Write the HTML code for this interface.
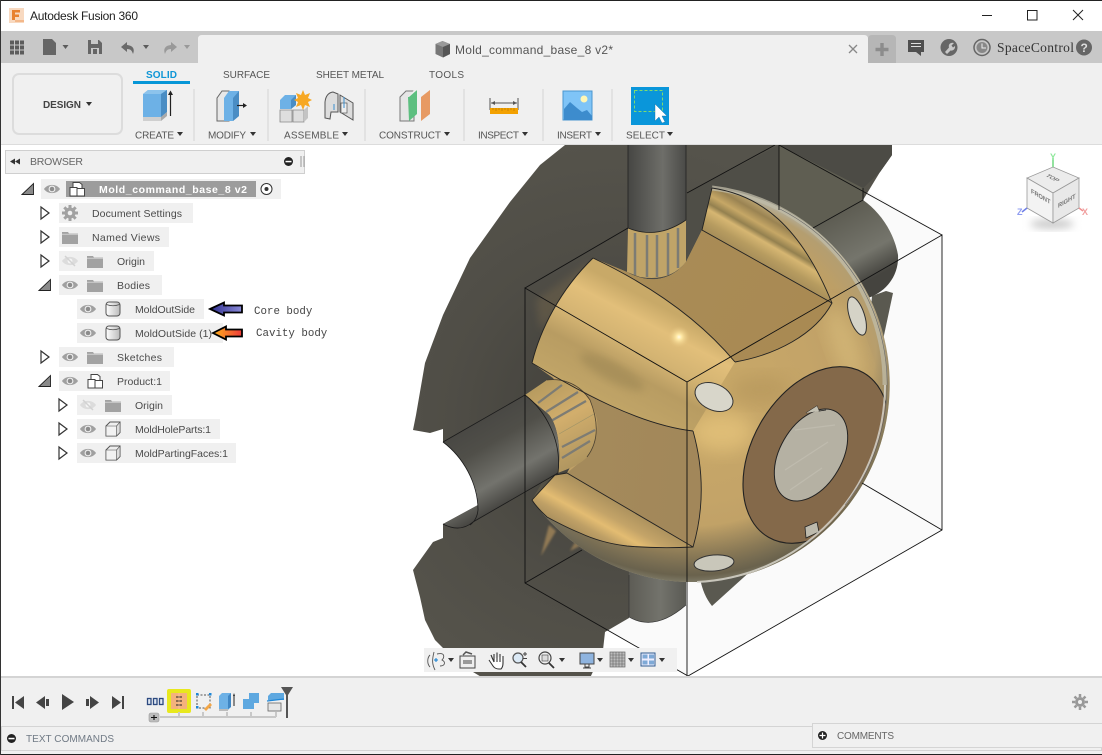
<!DOCTYPE html>
<html><head><meta charset="utf-8"><title>Autodesk Fusion 360</title>
<style>
html,body{margin:0;padding:0;background:#fff;width:1102px;height:755px;overflow:hidden}
svg{display:block;position:absolute;left:0;top:0}
text{font-family:"Liberation Sans",sans-serif;font-size:10px;fill:#555}
.tr{font-size:10.5px;fill:#4a4a4a}
.rb{font-size:10px;fill:#555}
.an{font-family:"Liberation Mono",monospace;font-size:10.8px;fill:#444}
</style></head><body>
<svg width="1102" height="755" viewBox="0 0 1102 755" xmlns="http://www.w3.org/2000/svg">
<defs>
<linearGradient id="cyl" x1="0" x2="1" y1="0" y2="0"><stop offset="0" stop-color="#464643"/><stop offset=".6" stop-color="#6e6e69"/><stop offset="1" stop-color="#4a4a47"/></linearGradient>
<linearGradient id="cylB" x1="0" x2="1" y1="0" y2="0"><stop offset="0" stop-color="#5d5c55"/><stop offset=".55" stop-color="#73736c"/><stop offset="1" stop-color="#5a5a54"/></linearGradient>
<linearGradient id="cylL" gradientUnits="userSpaceOnUse" x1="490" y1="415" x2="532" y2="488"><stop offset="0" stop-color="#494844"/><stop offset=".3" stop-color="#504f49"/><stop offset=".72" stop-color="#73736d"/><stop offset="1" stop-color="#474642"/></linearGradient>
<linearGradient id="cylR" gradientUnits="userSpaceOnUse" x1="825" y1="220" x2="860" y2="285"><stop offset="0" stop-color="#5d5c52"/><stop offset=".65" stop-color="#75756c"/><stop offset="1" stop-color="#45443f"/></linearGradient>
<radialGradient id="back" gradientUnits="userSpaceOnUse" cx="620" cy="420" r="280"><stop offset="0" stop-color="#3f3e39"/><stop offset=".6" stop-color="#4f4d46"/><stop offset="1" stop-color="#55534b"/></radialGradient>
<radialGradient id="gold" gradientUnits="userSpaceOnUse" cx="700" cy="390" r="198"><stop offset="0" stop-color="#c9a968"/><stop offset=".55" stop-color="#c4a468"/><stop offset=".85" stop-color="#bd9f66"/><stop offset=".95" stop-color="#b49e70"/><stop offset="1" stop-color="#b4b09f"/></radialGradient>
<radialGradient id="under" gradientUnits="userSpaceOnUse" cx="690" cy="340" r="245"><stop offset=".76" stop-color="#665f4b" stop-opacity="0"/><stop offset=".88" stop-color="#665f4b" stop-opacity=".6"/><stop offset=".96" stop-color="#665f4b" stop-opacity=".95"/><stop offset="1" stop-color="#85826f"/></radialGradient>
<linearGradient id="flat1" gradientUnits="userSpaceOnUse" x1="620" y1="240" x2="790" y2="340"><stop offset="0" stop-color="#a98c57"/><stop offset="1" stop-color="#a98a53"/></linearGradient>
<linearGradient id="flat2" gradientUnits="userSpaceOnUse" x1="590" y1="460" x2="700" y2="470"><stop offset="0" stop-color="#a48a5b"/><stop offset="1" stop-color="#a2875a"/></linearGradient>
<linearGradient id="bandU" gradientUnits="userSpaceOnUse" x1="630" y1="290" x2="575" y2="395"><stop offset="0" stop-color="#c8a968"/><stop offset=".18" stop-color="#e2bf7a"/><stop offset=".42" stop-color="#d3b372"/><stop offset=".62" stop-color="#b89c62"/><stop offset="1" stop-color="#c2a668"/></linearGradient>
<linearGradient id="bandL" gradientUnits="userSpaceOnUse" x1="608" y1="495" x2="583" y2="540"><stop offset="0" stop-color="#a98f5c"/><stop offset=".35" stop-color="#c4a468"/><stop offset=".55" stop-color="#e3bc72"/><stop offset=".75" stop-color="#bfa066"/><stop offset="1" stop-color="#a58c5c"/></linearGradient>
<linearGradient id="bandT" gradientUnits="userSpaceOnUse" x1="770" y1="268" x2="800" y2="216"><stop offset="0" stop-color="#a88f5a"/><stop offset=".15" stop-color="#b79c60"/><stop offset=".33" stop-color="#d6b672"/><stop offset=".42" stop-color="#93804f"/><stop offset=".55" stop-color="#c6a766"/><stop offset=".7" stop-color="#9a8352"/><stop offset=".9" stop-color="#c9b17c"/></linearGradient>
<linearGradient id="stubL" gradientUnits="userSpaceOnUse" x1="545" y1="385" x2="585" y2="460"><stop offset="0" stop-color="#b89c60"/><stop offset=".45" stop-color="#d2ae6c"/><stop offset="1" stop-color="#b09660"/></linearGradient>
<linearGradient id="body" x1="0" x2="1"><stop offset="0" stop-color="#fff"/><stop offset="1" stop-color="#bbb"/></linearGradient>
<linearGradient id="arB" x1="0" x2="1"><stop offset="0" stop-color="#2f2f8f"/><stop offset="1" stop-color="#8a8ad8"/></linearGradient>
<linearGradient id="arO" x1="0" x2="1"><stop offset="0" stop-color="#ffb21c"/><stop offset="1" stop-color="#ee3a3a"/></linearGradient>
<filter id="b1" x="-30%" y="-30%" width="160%" height="160%"><feGaussianBlur stdDeviation="1"/></filter>
<filter id="b3" x="-30%" y="-30%" width="160%" height="160%"><feGaussianBlur stdDeviation="4"/></filter>
<filter id="b8" x="-30%" y="-30%" width="160%" height="160%"><feGaussianBlur stdDeviation="9"/></filter>
<radialGradient id="spot"><stop offset="0" stop-color="#fffbe6"/><stop offset=".25" stop-color="#ffe9a5"/><stop offset="1" stop-color="#e4c17d" stop-opacity="0"/></radialGradient>
<clipPath id="vp"><rect x="0" y="145" width="1102" height="531"/></clipPath>
<clipPath id="sph"><circle cx="690" cy="385" r="197"/></clipPath>
<symbol id="eye" viewBox="0 0 16 12" overflow="visible"><path d="M0 6C3.500 .5 12.500 .5 16 6C12.500 11.500 3.500 11.500 0 6Z" fill="#a0a0a0"/><circle cx="8" cy="6" r="3.400" fill="#f0f0f0"/><circle cx="8" cy="6" r="2.300" fill="#8c8c8c"/></symbol>
<symbol id="eyeoff" viewBox="0 0 16 12" overflow="visible"><path d="M0 6C3.500 .5 12.500 .5 16 6C12.500 11.500 3.500 11.500 0 6Z" fill="#dcdcdc"/><circle cx="8" cy="6" r="2.400" fill="#f4f4f4"/><path d="M3 1L13 11" stroke="#d2d2d2" stroke-width="1.500"/></symbol>
<symbol id="folder" viewBox="0 0 16 13" overflow="visible"><path d="M0 1H6L7 2.500H16V13H0Z" fill="#a2a2a2"/><path d="M0 3.200H16" stroke="#e2e2e2" stroke-width=".7"/></symbol>
<symbol id="tri" viewBox="0 0 10 14" overflow="visible"><path d="M1 1L9 7L1 13Z" fill="#fff" stroke="#333" stroke-width="1.200"/></symbol>
<symbol id="down" viewBox="0 0 12 12" overflow="visible"><path d="M0 11.500L11.500 .5V11.500Z" fill="#8a8a8a" stroke="#222" stroke-width=".9"/></symbol>
<symbol id="comp" viewBox="0 0 16 16" overflow="visible"><path d="M1 15V6.500H4V1.500H10.500L13 3.500V7.500H15.500V15Z M4 6.500H8V15 M8 7.500H13" fill="#fff" stroke="#444" stroke-width="1"/></symbol>
<symbol id="cylic" viewBox="0 0 16 16" overflow="visible"><rect x="1" y="1" width="14" height="14" rx="3" fill="url(#body)" stroke="#555" stroke-width="1"/><path d="M1.500 3.500Q8 6 14.500 3.500" fill="none" stroke="#555" stroke-width=".8"/></symbol>
<symbol id="box" viewBox="0 0 16 16" overflow="visible"><path d="M1 5L5 1H15V11.500L11.500 15H1Z" fill="#eee" stroke="#555" stroke-width="1"/><path d="M11.500 15V5H1V15ZM11.500 5L15 1V11.500L11.500 15Z" fill="#ddd" stroke="#555" stroke-width=".6"/><rect x="1.500" y="5.500" width="9.500" height="9" fill="#f2f2f2"/></symbol>
<symbol id="car" viewBox="0 0 6 4" overflow="visible"><path d="M0 0H6L3 4Z" fill="#333"/></symbol>
</defs>

<!-- Window frame / title -->
<rect width="1102" height="755" fill="#fff"/>
<rect x="0" y="0" width="1102" height="1" fill="#222"/>
<g>
<rect x="9" y="8" width="15" height="15" fill="#f8d9c0"/>
<path d="M12 10H20V12.500H15V14.500H19V17H15V20H12Z" fill="#e8812f"/>
<rect x="15" y="20" width="9" height="2" fill="#f3b88a"/>
<text x="30" y="20" style="font-size:12px;fill:#222" textLength="108">Autodesk Fusion 360</text>
<rect x="982" y="15" width="10" height="1" fill="#222"/>
<rect x="1027.500" y="10.500" width="9.500" height="9.500" fill="none" stroke="#222"/>
<path d="M1073 10L1083 20M1083 10L1073 20" stroke="#222" stroke-width="1"/>
</g>

<!-- gray top bar -->
<rect x="1" y="31" width="1101" height="32" fill="#c8c8c8"/>
<path d="M198 63V39Q198 35 202 35H864Q868 35 868 39V63Z" fill="#f0f0f0"/>
<path d="M868 39Q868 35 872 35H892Q896 35 896 39V63H868Z" fill="#b6b6b6"/>
<g fill="#5c5c5c">
<path d="M10 41h4v4h-4zM15 41h4v4h-4zM20 41h4v4h-4zM10 46h4v4h-4zM15 46h4v4h-4zM20 46h4v4h-4zM10 51h4v4h-4zM15 51h4v4h-4zM20 51h4v4h-4z" transform="translate(0,-.5)"/>
<path d="M43 39H52L56 43V55H43Z" fill="#666"/>
<path d="M62.500 45H68.500L65.500 49Z"/>
<path d="M88 40H99L102 43V54H88Z" fill="#666"/><rect x="91" y="40" width="7" height="4" fill="#c8c8c8"/><rect x="91" y="48" width="8" height="6" fill="#c8c8c8"/><rect x="93" y="49" width="4" height="5" fill="#666"/>
<path d="M127 42L121 47L127 52V49C131 49 132 51 133 54C135 49 133 45.500 127 45Z" fill="#6a6a6a"/>
<path d="M143 45H149L146 49Z"/>
<path d="M171 42L177 47L171 52V49C167 49 166 51 165 54C163 49 165 45.500 171 45Z" fill="#999"/>
<path d="M184 45H190L187 49Z" fill="#999"/>
</g>
<g>
<path d="M442.500 41L450 44V54L443 57.500L435.500 54V44Z" fill="#777"/><path d="M435.500 44L442.500 41L450 44L443 47Z" fill="#999"/><path d="M443 47V57.500L450 54V44Z" fill="#555"/>
<text x="455" y="54" style="font-size:12px;fill:#555" textLength="158">Mold_command_base_8 v2*</text>
<path d="M849 45L857 53M857 45L849 53" stroke="#888" stroke-width="1.300"/>
<path d="M882 43V56M875.500 49.500H888.500" stroke="#8c8c8c" stroke-width="3.400"/>
<path d="M908 40H924V52H921V56L916 52H908Z" fill="#4f4f4f"/><path d="M911 43.500H921M911 46.500H921" stroke="#ddd"/>
<circle cx="949" cy="47.500" r="8.500" fill="#666"/><path d="M945 52L949 47.500C948 44 951 42 954 43L951.500 45.500L953 47.500L955 46C955.500 49 953 51 950.500 50.500L947 54Z" fill="#c8c8c8"/>
<circle cx="982" cy="47.500" r="8" fill="#c8c8c8" stroke="#666" stroke-width="1.500"/><circle cx="982" cy="47.500" r="5.500" fill="#888"/><path d="M982 43.500V48H986" stroke="#eee" fill="none"/>
<text x="997" y="52" style="font-family:'Liberation Serif',serif;font-size:13.500px;fill:#333" textLength="77">SpaceControl</text>
<circle cx="1084" cy="47.500" r="8" fill="#666"/><text x="1080.500" y="52" style="font-size:12px;font-weight:bold;fill:#ddd">?</text>
</g>

<!-- Ribbon -->
<rect x="1" y="63" width="1101" height="82" fill="#f0f0f0"/>
<rect x="1" y="144" width="1101" height="1" fill="#dcdcdc"/>
<rect x="13" y="74" width="109" height="60" rx="6" fill="#f0f0f0" stroke="#dcdcdc" stroke-width="2"/>
<text x="43" y="108" style="font-size:10px;font-weight:bold;fill:#444" textLength="38">DESIGN</text>
<use href="#car" x="86" y="102" width="6" height="4"/>
<text x="146" y="78" style="font-size:10px;font-weight:bold;fill:#0f96d6" textLength="31">SOLID</text>
<rect x="133" y="81" width="57" height="3" fill="#0696d7"/>
<text x="223" y="78" class="rb" textLength="47">SURFACE</text>
<text x="316" y="78" class="rb" textLength="68">SHEET METAL</text>
<text x="429" y="78" class="rb" textLength="35">TOOLS</text>
<g fill="#e2e2e2"><rect x="193" y="89" width="2" height="52"/><rect x="267" y="89" width="2" height="52"/><rect x="364" y="89" width="2" height="52"/><rect x="463" y="89" width="2" height="52"/><rect x="542" y="89" width="2" height="52"/><rect x="611" y="89" width="2" height="52"/></g>
<text x="135" y="138.500" class="rb" textLength="39">CREATE</text><use href="#car" x="177" y="132" width="6" height="4"/>
<text x="208" y="138.500" class="rb" textLength="38">MODIFY</text><use href="#car" x="250" y="132" width="6" height="4"/>
<text x="284" y="138.500" class="rb" textLength="55">ASSEMBLE</text><use href="#car" x="342" y="132" width="6" height="4"/>
<text x="379" y="138.500" class="rb" textLength="62">CONSTRUCT</text><use href="#car" x="444" y="132" width="6" height="4"/>
<text x="478" y="138.500" class="rb" textLength="41">INSPECT</text><use href="#car" x="522" y="132" width="6" height="4"/>
<text x="557" y="138.500" class="rb" textLength="35">INSERT</text><use href="#car" x="595" y="132" width="6" height="4"/>
<text x="626" y="138.500" class="rb" textLength="39">SELECT</text><use href="#car" x="667" y="132" width="6" height="4"/>

<!-- create icon -->
<path d="M143 94L148 90H167V112L161 117H143Z" fill="#6db1e6"/><path d="M143 94L148 90H167L161 94Z" fill="#8cc3ec"/><path d="M161 94L167 90V112L161 117Z" fill="#4a8dc4"/>
<path d="M143 117H161V121H143Z" fill="#cfcfcf"/><path d="M161 117L167 112V116L161 121Z" fill="#aaa"/>
<path d="M170.500 116V93" stroke="#222" stroke-width="1.200"/><path d="M168 95L170.500 90.500L173 95Z" fill="#222"/>
<!-- modify icon -->
<path d="M217 98L222 91H229V121H217Z" fill="#e8e8e8" stroke="#666"/><path d="M224 98L229 91H239V116L233 121H224Z" fill="#6db1e6"/><path d="M233 98L239 91V116L233 121Z" fill="#4a8dc4"/>
<path d="M237 105.500H245" stroke="#222" stroke-width="1.200"/><path d="M243 103L247 105.500L243 108Z" fill="#222"/>
<!-- assemble icons -->
<path d="M280 100L285 95H296V105L291 109H280Z" fill="#6db1e6"/><path d="M291 100L296 95V105L291 109Z" fill="#4a8dc4"/>
<path d="M280 110H292V122H280Z" fill="#dedede" stroke="#888" stroke-width=".8"/><path d="M293 110H304V122H293Z" fill="#dedede" stroke="#888" stroke-width=".8"/><path d="M304 110L308 106V118L304 122Z" fill="#c4c4c4"/>
<path d="M303 90L305 95L310 93L308 98L312 100L308 102L310 107L305 105L303 110L301 105L296 107L298 102L294 100L298 98L296 93L301 95Z" fill="#f7a823"/>
<path d="M325 118V102Q326 93 333 92L338 94V112L331 112L330 119Z" fill="#ddd" stroke="#555"/><path d="M340 95L353 103V120L340 112Z" fill="#ddd" stroke="#555"/><rect x="341" y="103" width="6" height="10" fill="#eee" stroke="#555" stroke-width=".7"/><path d="M344 97V108M334 104V110" stroke="#3a8fd0"/>
<!-- construct icon -->
<path d="M400 97L406 91H414V121H400Z" fill="#e6e6e6" stroke="#777"/><path d="M408 97L417 90V114L409 121Z" fill="#5dbf80"/><path d="M408 97L414 90H417L409 97Z" fill="#eee"/><path d="M421 97L430 90V114L421 121Z" fill="#e79a63"/>
<!-- inspect -->
<path d="M490 98V110M518 98V110" stroke="#555"/><path d="M491 103H517" stroke="#555"/><path d="M491 103L495 101V105ZM517 103L513 101V105Z" fill="#555"/>
<rect x="490" y="108" width="28" height="6" fill="#f3a100"/><path d="M493 108v2M496 108v3M499 108v2M502 108v3M505 108v2M508 108v3M511 108v2M514 108v3" stroke="#b97a00" stroke-width=".7"/>
<!-- insert -->
<rect x="563" y="91" width="29" height="29" fill="#7fc4f7" stroke="#4a96cf"/><circle cx="584" cy="99" r="3.500" fill="#fff6b5"/><path d="M564 120V109L570 102L577 108L582 112L587 110L592 116V120Z" fill="#3d8ccd"/>
<!-- select -->
<rect x="631" y="87" width="38" height="38" fill="#0a96da"/><rect x="634.500" y="90.500" width="28" height="21" fill="none" stroke="#7fdc6e" stroke-dasharray="3 2"/><path d="M655 104V121L659 117L662 123L665 122L662 116L667 116Z" fill="#fff" stroke="#1b6da0" stroke-width=".4"/>

<!-- Viewport 3D -->
<g clip-path="url(#vp)">
<!-- transparent box -->
<path d="M525 583L688 676L942 530V235L863 188L600 300Z" fill="#fafafa"/>
<!-- dark back wall -->
<path d="M565 145L540 165L510 202L470 258L443 315L425 363L416 415L413 430L430 433L443 429V442C463 457 478 483 478 505L443 524V538L433 542L413 570L420 597L425 620L435 640L443 648L473 672L483 678H590L603 650L605 632L629 618L640 500L800 330L863 200L880 172L892 155V145Z" fill="url(#back)"/>
<path d="M687 193L779 145H892V155L880 172L863 188V200L813 228L760 300L687 300Z" fill="#4f4e47"/>
<path d="M779 145L863 188V200L813 228L779 240Z" fill="#5f5e52"/>
<path d="M779 145H892V155L880 172L863 188Z" fill="#4c4b45"/>
<!-- right fragment -->
<path d="M872 296L886 291L893 293L883 340L870 320Z" fill="#5a5950"/>
<!-- right cylinder -->
<path d="M813 228L863 200C880 212 894 232 898 255C899 272 890 290 868 298L830 300Z" fill="url(#cylR)"/>
<!-- bottom cylinder -->
<path d="M629 560V617Q655 632 686 605V560Z" fill="url(#cylB)"/>
<path d="M629 575V617Q655 632 686 605" fill="none" stroke="#333" stroke-width=".7"/>
<!-- bottom fragment -->
<path d="M700 578Q703 595 712 606L754 568Z" fill="#5a5950"/>
<!-- top cylinder -->
<path d="M628 145H686V222Q657 244 628 228Z" fill="url(#cyl)"/>
<path d="M628 228Q657 240 686 220V262Q670 282 640 277L627 272Z" fill="#c0a468"/>
<g stroke="#7d7c74" stroke-width="2.500"><path d="M635 233V275M647 235V277M657 235V277M668 233V275M678 228V268"/></g>
<path d="M628 228Q657 240 686 220" fill="none" stroke="#222" stroke-width=".8"/>
<path d="M628 145V228M686 145V220" stroke="#222" stroke-width=".8" fill="none"/>
<!-- translucent gold haze on walls -->
<path d="M536 300L590 262L600 280L560 310L540 330Z" fill="#8a7550" opacity=".3" filter="url(#b3)"/>
<path d="M549 525L556 531L541 556Z" fill="#c09a60" opacity=".6" filter="url(#b1)"/>
<path d="M570 551L580 546L575 542Z" fill="#c09a60" opacity=".55" filter="url(#b1)"/>

<!-- gold body -->
<path d="M712 188A197.500 197.500 0 1 1 532 500L555 475L567 473L590 430L553 378L532 363C540 330 560 290 593 258L627 272C650 285 672 280 686 262L702 230Z" fill="url(#gold)"/>
<!-- soft highlights -->
<g clip-path="url(#sph)">
<ellipse cx="722" cy="432" rx="32" ry="20" fill="#e6c47c" opacity=".75" filter="url(#b8)"/>
<ellipse cx="845" cy="345" rx="14" ry="40" fill="#dcc07f" opacity=".6" filter="url(#b8)" transform="rotate(-20 845 345)"/>
<ellipse cx="760" cy="390" rx="30" ry="14" fill="#b3945a" opacity=".6" filter="url(#b8)"/>
</g>
<!-- lower sphere shading -->
<path d="M712 188A197.500 197.500 0 1 1 532 500Z" fill="url(#under)"/>
<!-- Upper band -->
<path d="M593 258C560 290 540 330 532 363C580 392 640 425 693 431L735 362C700 320 650 285 593 258Z" fill="url(#bandU)"/>
<ellipse cx="612" cy="372" rx="36" ry="9" fill="#94804f" opacity=".45" filter="url(#b3)" transform="rotate(28 612 372)"/>
<!-- Flats -->
<path d="M702 230L832 303C815 335 775 355 735 362C700 320 650 285 593 258L627 272C650 285 672 280 686 262Z" fill="url(#flat1)"/>
<path d="M583 391C620 412 655 425 693 431C704 470 704 510 693 547L567 473L585 458C597 445 600 425 595 413C592 402 587 396 583 391Z" fill="url(#flat2)"/>
<!-- Top band -->
<path d="M712 188C760 195 800 225 832 303L702 230Z" fill="url(#bandT)"/>
<!-- lower band -->
<path d="M567 473L555 475L532 500C537 508 542 512 547 517C560 524 570 529 580 533C595 540 610 544 627 546C650 548 672 548 693 547Z" fill="url(#bandL)"/>
<!-- stub left -->
<path d="M525 395L547 380C565 378 580 385 590 400C598 420 600 440 587 457C580 465 565 470 558 473C562 445 556 420 547 413Z" fill="url(#stubL)"/>
<g stroke="#7d7c74" stroke-width="2.300"><path d="M538 403L562 385M546 412L578 392M551 421L586 401M562 447L595 430M562 458L590 441"/></g>
<path d="M559 434L594 414" stroke="#a09468" stroke-width=".7"/>
<path d="M547 380C565 378 580 385 590 400C598 420 600 440 587 457" fill="none" stroke="#4a4030" stroke-width=".8"/>
<!-- left cylinder -->
<path d="M443 442L525 395L547 413C556 420 562 445 558 473L473 522Q460 533 443 524L478 505C478 483 463 457 443 442Z" fill="url(#cylL)"/>
<path d="M443 442L525 395C545 410 562 440 558 473L473 522Q460 533 443 524M443 442C463 457 478 483 478 510Q477 520 470 525" fill="none" stroke="#1b1b1b" stroke-width=".8"/>
<!-- round boss -->
<g clip-path="url(#sph)">
<ellipse cx="816" cy="455" rx="64" ry="95" transform="rotate(30 816 455)" fill="#84694a" stroke="#222" stroke-width="1.100"/>
</g>
<ellipse cx="811" cy="455" rx="31" ry="50" transform="rotate(30 811 455)" fill="#b5b1a3" stroke="#222"/>
<path d="M795 430L835 425M785 470L828 442M790 490L822 468" stroke="#c9c6b9" stroke-width="1.200" opacity=".5"/>
<path d="M806 413L817 406L819 411L826 410" fill="none" stroke="#222" stroke-width=".8"/><path d="M806 413L817 406L819 411Z" fill="#c5c2b4"/>
<path d="M805 527L817 522L819 532L806 538Z" fill="#bdbaad" stroke="#222" stroke-width=".8"/>
<!-- small holes -->
<ellipse cx="714" cy="397" rx="20" ry="13" transform="rotate(25 714 397)" fill="#d8d6ca" stroke="#333"/>
<ellipse cx="857" cy="316" rx="7.500" ry="20" transform="rotate(-18 857 316)" fill="#d5d3c7" stroke="#333"/>
<ellipse cx="714" cy="563" rx="20" ry="8" transform="rotate(-5 714 563)" fill="#c9c7ba" stroke="#333"/>
<!-- silhouette rim -->
<path d="M712 188A196 196 0 0 1 885 385" fill="none" stroke="#c0bca8" stroke-width="5" opacity=".75"/>
<path d="M885 385A197 197 0 0 1 697 582" fill="none" stroke="#d6d4ca" stroke-width="2" opacity=".85"/>
<path d="M780 209A196 196 0 0 1 845 505" fill="none" stroke="#666" stroke-width=".6"/>
<!-- Edge lines -->
<g fill="none" stroke="#222" stroke-width=".9">
<path d="M593 258C560 290 540 330 532 363M593 258C650 285 700 320 735 362M532 363C580 392 640 425 693 431"/>
<path d="M712 188C760 195 800 225 832 303C815 335 775 355 735 362"/>
<path d="M712 188L702 230L832 303"/>
<path d="M693 431C704 470 704 510 693 547L567 473"/>
<path d="M567 473L555 475L532 500C537 508 542 512 547 517C560 524 570 529 580 533C595 540 610 544 627 546C650 548 672 548 693 547"/>
</g>
<!-- Box lines -->
<g fill="none" stroke="#111" stroke-width=".9">
<path d="M687 382L942 235V530L688 676L525 583V288L687 382V676"/>
<path d="M525 288L628 228M687 193L775 145"/>
<path d="M779 145L942 235"/>
<path d="M779 145V210"/>
<path d="M942 530L862 483"/>
<path d="M525 583L582 550"/>
<path d="M813 228L863 200V188"/>
</g>
<circle cx="679" cy="337" r="11" fill="url(#spot)"/>
</g>

<!-- nav bar -->
<rect x="424" y="648" width="253" height="24" fill="#f0f0f0"/>
<g fill="none" stroke="#555" stroke-width=".9">
<path d="M430 655C427 658 427 664 430 667M437 654C446 652 444 658 442 660C446 662 445 666 440 666M434 652C432 660 432 664 435 670"/>
</g>
<path d="M434 660H438M436 658V662" stroke="#0a7bd0"/>
<use href="#car" x="448" y="658" width="6" height="4"/>
<rect x="460" y="656" width="15" height="12" fill="#eee" stroke="#444"/><rect x="463" y="660" width="9" height="4" fill="#999"/><path d="M463 655L466 652L472 654" stroke="#555" fill="none" stroke-width="1.500"/>
<path d="M489 660L493 666Q495 669 499 669H501Q503 667 503 663V656M500 662V654M497 662V652.500M494 662V654M494 662L491 655" fill="#fff" stroke="#333" stroke-width="1.100"/>
<circle cx="518" cy="658" r="5" fill="#dbe9f5" stroke="#555" stroke-width="1.200"/><path d="M521 662L526 667" stroke="#333" stroke-width="1.800"/><path d="M525 652V656M523 654H527M523 658.500H527" stroke="#444"/>
<circle cx="545" cy="658" r="6" fill="#f0f0f0" stroke="#444" stroke-width="1.200"/><rect x="542" y="655" width="6" height="6" fill="#ddd" stroke="#555" stroke-width=".7"/><path d="M549 663L554 668" stroke="#333" stroke-width="1.800"/>
<use href="#car" x="559" y="658" width="6" height="4"/>
<rect x="580" y="653" width="14" height="11" fill="#8fb4df" stroke="#444"/><path d="M585 664V667H589V664M583 668H591" stroke="#444" fill="none"/>
<use href="#car" x="597" y="658" width="6" height="4"/>
<g><rect x="610" y="652" width="15" height="15" fill="#bbb" stroke="#666" stroke-width=".7"/><path d="M613 652V667M616 652V667M619 652V667M622 652V667M610 655H625M610 658H625M610 661H625M610 664H625" stroke="#666" stroke-width=".6"/></g>
<use href="#car" x="628" y="658" width="6" height="4"/>
<rect x="641" y="653" width="14" height="13" fill="#eef" stroke="#2f5c8f"/><rect x="642.500" y="654.500" width="5" height="4" fill="#7ea9d6"/><rect x="649" y="654.500" width="5" height="4" fill="#7ea9d6"/><rect x="642.500" y="660.500" width="5" height="4" fill="#7ea9d6"/><rect x="649" y="660.500" width="5" height="4" fill="#7ea9d6"/>
<use href="#car" x="659" y="658" width="6" height="4"/>

<!-- viewcube -->
<ellipse cx="1052" cy="224" rx="22" ry="5" fill="#ccc" filter="url(#b3)"/>
<path d="M1053 167L1079 178L1053 193L1027 178Z" fill="#ececec" stroke="#999" stroke-width=".8"/>
<path d="M1027 178L1053 193V223L1027 208Z" fill="#f3f3f3" stroke="#999" stroke-width=".8"/>
<path d="M1079 178L1053 193V223L1079 208Z" fill="#e8e8e8" stroke="#999" stroke-width=".8"/>
<text transform="matrix(.87 .45 -.87 .45 1045 176)" style="font-size:6.500px;fill:#777;font-weight:bold">TOP</text>
<text transform="matrix(.87 .5 0 1 1031 193)" style="font-size:6.500px;fill:#777;font-weight:bold">FRONT</text>
<text transform="matrix(.87 -.5 0 1 1058 208)" style="font-size:6.500px;fill:#777;font-weight:bold">RIGHT</text>
<path d="M1053 167V158" stroke="#6fd87f" stroke-width="1.500"/><text x="1050" y="160" style="font-size:9px;font-weight:bold;fill:#8fe89c">Y</text>
<path d="M1027 208L1022 212" stroke="#6f7fe8" stroke-width="1.500"/><text x="1017" y="215" style="font-size:9px;font-weight:bold;fill:#8f9cf0">Z</text>
<path d="M1079 208L1083 211" stroke="#f09090" stroke-width="1.500"/><text x="1082" y="215" style="font-size:9px;font-weight:bold;fill:#f0a0a0">X</text>

<!-- Browser header -->
<rect x="5.500" y="150.500" width="299" height="23" fill="#f0f0f0" stroke="#cfcfcf"/>
<path d="M10 161.500L15 158.500V164.500ZM15 161.500L20 158.500V164.500Z" fill="#333"/>
<text x="30" y="165" style="font-size:10.500px;fill:#666" textLength="53">BROWSER</text>
<circle cx="288.500" cy="161.500" r="4.500" fill="#222"/><rect x="285.500" y="160.800" width="6" height="1.500" fill="#fff"/>
<path d="M301 156V167M304 156V167" stroke="#999"/>

<!-- Tree -->
<g fill="#f0f0f0">
<rect x="41" y="179" width="240" height="20"/>
<rect x="59" y="203" width="134" height="20"/>
<rect x="59" y="227" width="110" height="20"/>
<rect x="59" y="251" width="95" height="20"/>
<rect x="59" y="275" width="103" height="20"/>
<rect x="77" y="299" width="127" height="20"/>
<rect x="77" y="323" width="146" height="20"/>
<rect x="59" y="347" width="115" height="20"/>
<rect x="59" y="371" width="111" height="20"/>
<rect x="77" y="395" width="95" height="20"/>
<rect x="77" y="419" width="143" height="20"/>
<rect x="77" y="443" width="159" height="20"/>
</g>
<rect x="66" y="181" width="190" height="16" fill="#9c9c9c"/>
<use href="#down" x="22" y="183" width="12" height="12"/>
<use href="#eye" x="44" y="183" width="16" height="12"/>
<use href="#comp" x="69" y="181" width="16" height="16"/>
<text x="99" y="193" style="font-size:10.500px;font-weight:bold;fill:#fff" textLength="148">Mold_command_base_8 v2</text>
<circle cx="266.500" cy="189" r="5.500" fill="#fff" stroke="#333"/><circle cx="266.500" cy="189" r="2" fill="#333"/>

<use href="#tri" x="40" y="206" width="10" height="14"/>
<g transform="translate(70 213)"><circle r="5.500" fill="#a2a2a2"/><circle r="2.300" fill="#f0f0f0"/><path d="M0-8V-5M0 8V5M-8 0H-5M8 0H5M-5.700-5.700L-3.500-3.500M5.700 5.700L3.500 3.500M-5.700 5.700L-3.500 3.500M5.700-5.700L3.500-3.500" stroke="#a2a2a2" stroke-width="3"/></g>
<text x="92" y="217" class="tr" textLength="90">Document Settings</text>

<use href="#tri" x="40" y="230" width="10" height="14"/>
<use href="#folder" x="62" y="231" width="16" height="13"/>
<text x="92" y="241" class="tr" textLength="68">Named Views</text>

<use href="#tri" x="40" y="254" width="10" height="14"/>
<use href="#eyeoff" x="62" y="255" width="16" height="12"/>
<use href="#folder" x="87" y="255" width="16" height="13"/>
<text x="117" y="265" class="tr" textLength="28">Origin</text>

<use href="#down" x="39" y="279" width="12" height="12"/>
<use href="#eye" x="62" y="279" width="16" height="12"/>
<use href="#folder" x="87" y="279" width="16" height="13"/>
<text x="117" y="289" class="tr" textLength="33">Bodies</text>

<use href="#eye" x="80" y="303" width="16" height="12"/>
<use href="#cylic" x="105" y="301" width="16" height="16"/>
<text x="135" y="313" class="tr" textLength="60">MoldOutSide</text>
<use href="#eye" x="80" y="327" width="16" height="12"/>
<use href="#cylic" x="105" y="325" width="16" height="16"/>
<text x="135" y="337" class="tr" textLength="77">MoldOutSide (1)</text>

<use href="#tri" x="40" y="350" width="10" height="14"/>
<use href="#eye" x="62" y="351" width="16" height="12"/>
<use href="#folder" x="87" y="351" width="16" height="13"/>
<text x="117" y="361" class="tr" textLength="45">Sketches</text>

<use href="#down" x="39" y="375" width="12" height="12"/>
<use href="#eye" x="62" y="375" width="16" height="12"/>
<use href="#comp" x="87" y="373" width="16" height="16"/>
<text x="117" y="385" class="tr" textLength="45">Product:1</text>

<use href="#tri" x="58" y="398" width="10" height="14"/>
<use href="#eyeoff" x="80" y="399" width="16" height="12"/>
<use href="#folder" x="105" y="399" width="16" height="13"/>
<text x="135" y="409" class="tr" textLength="28">Origin</text>

<use href="#tri" x="58" y="422" width="10" height="14"/>
<use href="#eye" x="80" y="423" width="16" height="12"/>
<use href="#box" x="105" y="421" width="16" height="16"/>
<text x="135" y="433" class="tr" textLength="76">MoldHoleParts:1</text>

<use href="#tri" x="58" y="446" width="10" height="14"/>
<use href="#eye" x="80" y="447" width="16" height="12"/>
<use href="#box" x="105" y="445" width="16" height="16"/>
<text x="135" y="457" class="tr" textLength="93">MoldPartingFaces:1</text>

<!-- arrows -->
<path d="M210 309L224 302.500V305.500H242V312.500H224V315.500Z" fill="url(#arB)" stroke="#000" stroke-width="1.800"/>
<path d="M213 333L226 326.500V329.500H242V336.500H226V339.500Z" fill="url(#arO)" stroke="#000" stroke-width="1.800"/>
<text x="254" y="314" class="an">Core body</text>
<text x="256" y="336" class="an">Cavity body</text>

<!-- Timeline -->
<rect x="1" y="676" width="1101" height="79" fill="#f0f0f0"/>
<rect x="1" y="676" width="1101" height="2" fill="#d4d4d4"/>
<g fill="#444">
<path d="M12 696H14V709H12ZM24 696V709L15 702.500Z"/>
<path d="M36 702.500L45 696V709ZM46 699H49V706H46Z"/>
<path d="M62 694L74 702L62 710Z"/>
<path d="M99 702.500L90 696V709ZM86 699H89V706H86Z"/>
<path d="M112 696L121 702.500L112 709ZM122 696H124V709H122Z"/>
</g>
<g fill="#dfe7f2" stroke="#2d4a80" stroke-width="1.300"><rect x="147.500" y="698.500" width="3.500" height="6"/><rect x="153.500" y="698.500" width="3.500" height="6"/><rect x="159.500" y="698.500" width="3.500" height="6"/></g>
<rect x="167" y="689" width="24" height="24" rx="2" fill="#e8e81e"/>
<rect x="171" y="693" width="16" height="16" fill="#f4b27c"/>
<path d="M176 697H182M176 701H182M176 705H182" stroke="#222"/><path d="M179 693V709" stroke="#f7cfa8" stroke-width=".6"/>
<rect x="197" y="695" width="13" height="13" fill="none" stroke="#555" stroke-dasharray="2 1.500"/>
<g fill="#1e87d8"><rect x="196" y="693" width="2.500" height="2.500"/><rect x="209" y="693" width="2.500" height="2.500"/><rect x="196" y="706" width="2.500" height="2.500"/></g>
<path d="M204 709L210 703L212 705L206 711Z" fill="#f3a646"/>
<path d="M219 696L222 693H231V707L228 710H219Z" fill="#6db1e6"/><path d="M228 696L231 693V707L228 709Z" fill="#3f86c4"/><rect x="219" y="709" width="9" height="2" fill="#bbb"/><path d="M234 706V695" stroke="#222"/><path d="M233 696L234 693L235 696Z" fill="#222"/>
<path d="M249 693H259V703H254V709H243V699H249Z" fill="#5ea8e0"/>
<path d="M268 696L271 693H284V700H268Z" fill="#5ea8e0"/><rect x="268" y="703" width="13" height="8" fill="#e6e6e6" stroke="#666" stroke-width=".8"/><path d="M267 701L284 699" stroke="#1e87d8" stroke-width="1.300"/>
<g fill="#c8c8c8"><rect x="160" y="716" width="116" height="2"/><rect x="178" y="712" width="2" height="5"/><rect x="202" y="712" width="2" height="5"/><rect x="226" y="712" width="2" height="5"/><rect x="250" y="712" width="2" height="5"/><rect x="275" y="712" width="2" height="5"/></g>
<rect x="149" y="713" width="10" height="9" rx="2" fill="#bcbcbc" stroke="#999" stroke-width=".6"/><path d="M151 717.500H157M154 715V720" stroke="#111" stroke-width="1.100"/>
<path d="M281 687H293L288 695V718H286V695Z" fill="#555"/>
<g transform="translate(1080 702)"><circle r="5" fill="#999"/><circle r="2" fill="#f0f0f0"/><path d="M0-8V-5M0 8V5M-8 0H-5M8 0H5M-5.500-5.500L-3.500-3.500M5.500 5.500L3.500 3.500M-5.500 5.500L-3.500 3.500M5.500-5.500L3.500-3.500" stroke="#999" stroke-width="2.500"/></g>

<!-- bottom panels -->
<rect x="1.500" y="726.500" width="1100" height="24" fill="#f0f0f0" stroke="#d4d4d4"/>
<circle cx="11.500" cy="738.500" r="4.500" fill="#222"/><rect x="8.500" y="737.800" width="6" height="1.500" fill="#fff"/>
<text x="26" y="742" style="font-size:10px;fill:#707a85" textLength="88">TEXT COMMANDS</text>
<rect x="812.500" y="723.500" width="290" height="24" fill="#f0f0f0" stroke="#d4d4d4"/>
<circle cx="822.500" cy="735.500" r="4.500" fill="#222"/><path d="M819.500 735.500H825.500M822.500 732.500V738.500" stroke="#fff" stroke-width="1.200"/>
<text x="837" y="739" style="font-size:10px;fill:#666" textLength="57">COMMENTS</text>
<rect x="0" y="754" width="1102" height="1" fill="#222"/>
<rect x="0" y="0" width="1" height="755" fill="#333"/>
</svg>
</body></html>
